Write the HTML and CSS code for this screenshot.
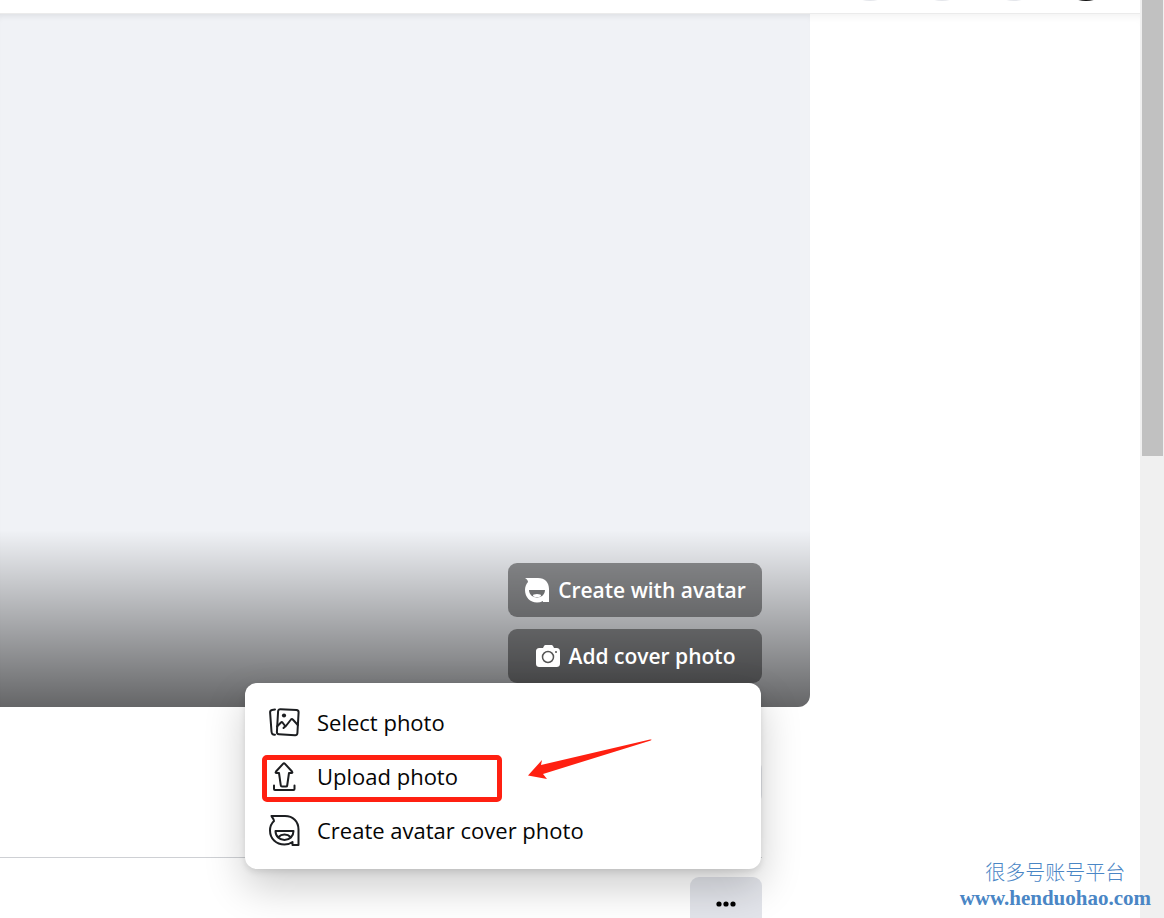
FILE: index.html
```html
<!DOCTYPE html>
<html lang="en">
<head>
  <meta charset="UTF-8">
  <title>Profile</title>
  <link rel="stylesheet" href="styles.css">
</head>
<body>
  <div class="page">
    <header class="topbar">
      <span class="circle"></span>
      <span class="circle"></span>
      <span class="circle"></span>
      <span class="circle circle-dark"></span>
    </header>

    <main class="profile">
      <section class="cover">
        <div class="cover-actions">
          <button class="cover-btn" type="button">
            <svg width="26" height="26" viewBox="0 0 26 26">
              <path fill="#fff" d="M1 1h13c7 0 11 4.500 11 11v13h-6v-1c-2 1-4 1.500-6 1.500C6 25.500 1 20 1 13c0-3 1-6 3-8C4 3 2.500 2 1 1z"/>
              <path fill="#6c6d6e" d="M5 13h16c0 4.500-3.500 7.500-8 7.500S5 17.500 5 13z"/>
              <ellipse cx="13" cy="18.500" rx="4" ry="1.500" fill="#fff"/>
            </svg>
            Create with avatar
          </button>
          <button class="cover-btn" type="button">
            <svg width="26" height="26" viewBox="0 0 26 26">
              <path fill="#fff" d="M5 5h3l1-2c.5-1 1-1 2-1h5c1 0 1.500 0 2 1l1 2h2c3 0 4 1 4 4v11c0 3-1 4-4 4H5c-3 0-4-1-4-4V9c0-3 1-4 4-4z"/>
              <circle cx="13" cy="14" r="5.500" fill="none" stroke="#555" stroke-width="1.500"/>
              <circle cx="21" cy="9" r="1" fill="#555"/>
            </svg>
            Add cover photo
          </button>

          <div class="menu">
            <button class="menu-item" type="button">
              <svg class="menu-icon" width="32" height="32" viewBox="0 0 32 32">
                <path d="M7 3.500L4 4c-1.500.3-2 1-1.900 2.500l1.400 19c.2 2 1 3.500 3.500 3.200"/>
                <path d="M12.500 3.200l16 .8c1.500.1 2.200.9 2.100 2.400l-1.200 20.800c-.1 1.500-.9 2.200-2.400 2.100l-16-1c-1.500-.1-2.200-.9-2.100-2.400L10.100 5.300c.1-1.500.9-2.200 2.400-2.100z"/>
                <path d="M9 20.500l4-4c.5-.5 1-.5 1.500 0l3 4 5.500-7c.6-.7 1.200-.7 1.800 0l5 5.500M17.500 20l-2 2"/>
                <circle cx="16" cy="9.500" r="2.100" class="dot"/>
              </svg>
              Select photo
            </button>
            <button class="menu-item" type="button">
              <svg class="menu-icon" width="32" height="32" viewBox="0 0 32 32">
                <path d="M15 3.800c.7-.8 1.300-.8 2 0l7 7.700c.8 1 .4 1.500-.5 1.500H21l-1.800 12.500c-.1.800-.5 1-1.200 1h-4c-.7 0-1.100-.2-1.200-1L11 13H8.500c-.9 0-1.300-.5-.5-1.500z"/>
                <path d="M6 25.500V29c0 .7.300 1 1 1h18.500c.7 0 1-.3 1-1v-3.500"/>
              </svg>
              Upload photo
            </button>
            <button class="menu-item" type="button">
              <svg class="menu-icon" width="32" height="32" viewBox="0 0 32 32">
                <path d="M3.500 2H17c8 0 13.500 5.500 13.500 13.500V31h-6v-3c-2.300 1.700-5 2.500-8 2.500C8 30.500 2 24.500 2 16.500c0-4 1.300-7 4-9.500C6 5 4.500 4 3.500 2z"/>
                <path d="M7.500 17h18c0 5.500-4 9-9 9s-9-3.500-9-9z"/>
                <path d="M10.500 23c3-3.300 9-3.300 12 0"/>
              </svg>
              Create avatar cover photo
            </button>

            <span class="highlight"></span>
            <svg class="arrow" width="126" height="42" viewBox="0 0 126 42">
              <path fill="#ff2011" d="M1 37.500L15 22l-1 5L123 1.500c2-.4 2 .6 0 1.200L16 36l4 5z"/>
            </svg>
          </div>
        </div>
      </section>

      <section class="profile-info">
        <button class="edit-btn" type="button" aria-label="Edit profile"></button>
      </section>

      <nav class="tabs">
        <button class="more-btn" type="button" aria-label="More">
          <svg width="20" height="6" viewBox="0 0 20 6">
            <circle cx="3" cy="3" r="2.600"/>
            <circle cx="10" cy="3" r="2.600"/>
            <circle cx="17" cy="3" r="2.600"/>
          </svg>
        </button>
      </nav>
    </main>
  </div>

  <div class="scrollbar"><div class="thumb"></div></div>

  <div class="watermark">
    <span class="watermark-name" lang="zh">很多号账号平台</span>
    <span class="watermark-url">www.henduohao.com</span>
  </div>
</body>
</html>
```

FILE: styles.css
```css
* {
  box-sizing: border-box;
}

body {
  display: flex;
  position: relative;
  height: 100vh;
  margin: 0;
  overflow: hidden;
  background: #fff;
  font-family: "Open Sans", "Noto Sans", sans-serif;
}

button {
  border: none;
  font-family: inherit;
  cursor: pointer;
}

.page {
  flex: 1;
  min-width: 0;
}

/* top bar */
.topbar {
  display: flex;
  justify-content: flex-end;
  align-items: flex-end;
  gap: 12px;
  height: 13px;
  padding: 0 24px 12px 0;
  overflow: hidden;
}

.circle {
  flex: none;
  width: 60px;
  height: 60px;
  border-radius: 50%;
  background: #e4e6eb;
}

.circle-dark {
  background: #111;
}

.profile {
  border-top: 1px solid #ebebeb;
  box-shadow: inset 0 8px 8px -6px rgba(0, 0, 0, 0.06);
}

/* cover */
.cover {
  display: flex;
  justify-content: flex-end;
  align-items: flex-end;
  height: 693px;
  margin-right: 330px;
  padding: 0 48px 24px 0;
  border-radius: 0 0 12px 0;
  background: linear-gradient(to top, rgba(0, 0, 0, 0.58), rgba(0, 0, 0, 0) 177px), #f0f2f6;
  box-shadow: inset 0 6px 6px -4px rgba(0, 0, 0, 0.08);
}

.cover-actions {
  display: flex;
  position: relative;
  flex-direction: column;
  gap: 12px;
  width: 254px;
}

.cover-btn {
  display: flex;
  justify-content: center;
  align-items: center;
  gap: 8px;
  height: 54px;
  padding: 0;
  border-radius: 9px;
  background: rgba(0, 0, 0, 0.4);
  color: #fff;
  font-size: 21px;
  font-weight: 600;
  white-space: nowrap;
}

/* drop-down menu */
.menu {
  position: absolute;
  top: 100%;
  right: 1px;
  z-index: 1;
  width: 516px;
  padding: 12px;
  border-radius: 12px;
  background: #fff;
  box-shadow: 0 18px 42px rgba(0, 0, 0, 0.2), 0 3px 6px rgba(0, 0, 0, 0.1);
}

.menu-item {
  display: flex;
  align-items: center;
  gap: 17px;
  width: 100%;
  height: 54px;
  padding: 0 11px;
  background: none;
  color: #050505;
  font-size: 22px;
  text-align: left;
}

.menu-icon {
  fill: none;
  stroke: #1c1e21;
  stroke-width: 2;
  stroke-linejoin: round;
  stroke-linecap: round;
}

.menu-icon .dot {
  fill: #1c1e21;
  stroke: none;
}

.highlight {
  position: absolute;
  top: 72px;
  left: 17px;
  width: 240px;
  height: 47px;
  border: 5px solid #ff2011;
  border-radius: 5px;
}

.arrow {
  position: absolute;
  top: 55px;
  left: 282px;
}

/* below the cover */
.profile-info {
  display: flex;
  justify-content: flex-end;
  align-items: center;
  height: 150px;
  margin-right: 378px;
}

.edit-btn {
  width: 180px;
  height: 44px;
  border-radius: 9px;
  background: #e4e6eb;
}

.tabs {
  display: flex;
  justify-content: flex-end;
  margin-right: 378px;
  padding-top: 19px;
  border-top: 1px solid #ced0d4;
}

.more-btn {
  display: flex;
  justify-content: center;
  align-items: center;
  width: 72px;
  height: 54px;
  padding: 0;
  border-radius: 9px;
  background: #e2e4ea;
}

/* scrollbar */
.scrollbar {
  width: 24px;
  padding: 0 1px 0 2px;
  background: #f0f0f0;
}

.thumb {
  height: 456px;
  background: #c1c1c1;
}

.watermark {
  display: flex;
  position: absolute;
  right: 13px;
  bottom: 7px;
  flex-direction: column;
  align-items: center;
  color: #4a86c5;
}

.watermark-name {
  font-family: "Noto Sans CJK SC", sans-serif;
  font-size: 20px;
  font-weight: 300;
  line-height: 26px;
}

.watermark-url {
  font-family: "Liberation Serif", serif;
  font-size: 21px;
  font-weight: bold;
  line-height: 26px;
}
```
